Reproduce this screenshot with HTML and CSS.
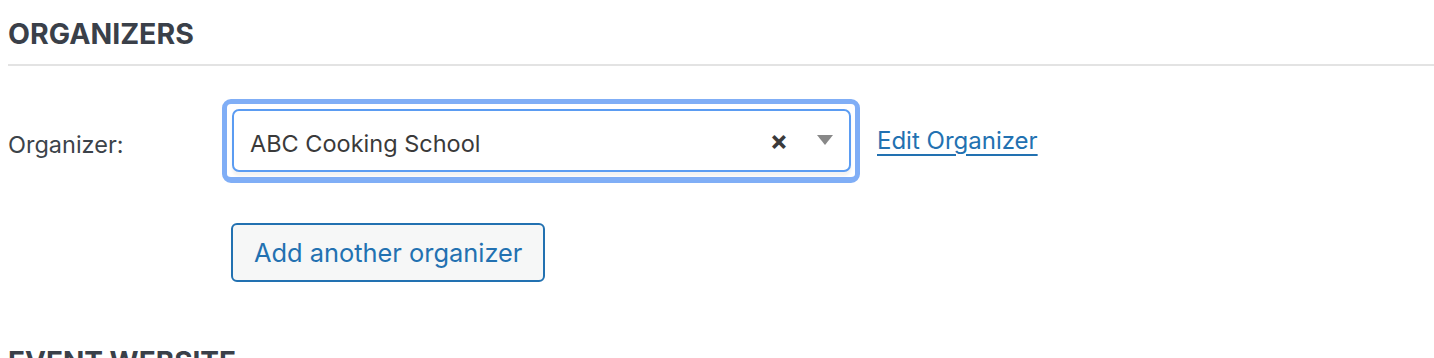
FILE: index.html
```html
<!DOCTYPE html>
<html lang="en">
<head>
    <meta charset="UTF-8">
    <meta name="viewport" content="width=device-width, initial-scale=1.0">
    <title>Organizers</title>
    <link rel="stylesheet" href="styles.css">
</head>
<body>
    <div class="section">
        <h3 class="section-title">ORGANIZERS</h3>

        <div class="field-row">
            <label class="field-label" for="organizer">Organizer:</label>
            <div class="select-focus">
                <div class="select-box" id="organizer">
                    <span class="select-value">ABC Cooking School</span>
                    <span class="select-clear">&times;</span>
                    <span class="select-arrow"></span>
                </div>
            </div>
            <a href="#" class="edit-link">Edit Organizer</a>
        </div>

        <div class="field-row add-row">
            <button class="button">Add another organizer</button>
        </div>
    </div>

    <div class="section">
        <h3 class="section-title">EVENT WEBSITE</h3>
    </div>
</body>
</html>
```

FILE: styles.css
```css
:root {
    --text-color: #3c434a;
    --heading-color: #3a4049;
    --link-color: #2271b1;
    --focus-ring: #80aef6;
    --focus-border: #5b9cf2;
    --divider: #e3e3e3;
}

* {
    margin: 0;
    padding: 0;
    box-sizing: border-box;
    font-family: Inter, 'Noto Sans', sans-serif;
}

body {
    background-color: #ffffff;
    color: var(--text-color);
    padding: 0 0 0 8px;
    overflow: hidden;
}

.section-title {
    font-size: 28.5px;
    font-weight: 700;
    color: var(--heading-color);
    line-height: 34px;
    padding-top: 17px;
    padding-bottom: 13px;
    border-bottom: 2px solid var(--divider);
}

.section + .section .section-title {
    border-bottom: none;
    font-size: 28px;
}

.field-row {
    display: flex;
    align-items: center;
    margin-top: 33px;
}

.field-label {
    width: 214px;
    font-size: 23.5px;
    color: var(--text-color);
    padding-top: 6px;
}

.select-focus {
    border: 5px solid var(--focus-ring);
    border-radius: 9px;
    padding: 5px 4px 5px 5px;
    border-bottom-width: 6px;
}

.select-box {
    display: flex;
    align-items: center;
    width: 619px;
    height: 63px;
    border: 2px solid var(--focus-border);
    border-radius: 7px;
    padding: 6px 16px 0 16px;
    box-shadow: 0 4px 3px rgba(0, 0, 0, 0.05);
    background-color: #ffffff;
}

.select-value {
    flex: 1;
    font-size: 23.5px;
    color: #3a3a3a;
}

.select-clear {
    font-size: 27px;
    font-weight: 700;
    color: #3a3a3a;
    margin-right: 29px;
    margin-top: -6px;
}

.select-arrow {
    width: 0;
    height: 0;
    border-left: 8px solid transparent;
    border-right: 8px solid transparent;
    border-top: 10px solid #888888;
    margin-top: -8px;
}

.edit-link {
    margin-left: 17px;
    font-size: 24px;
    color: var(--link-color);
    text-decoration: underline;
    text-decoration-thickness: 2px;
    text-underline-offset: 5px;
    margin-top: -2px;
}

.add-row {
    margin-top: 40px;
    padding-left: 223px;
}

.button {
    height: 59px;
    padding: 0 21px;
    border: 2px solid var(--link-color);
    border-radius: 6px;
    background-color: #f6f7f7;
    color: var(--link-color);
    font-size: 25.4px;
    cursor: pointer;
}

.section + .section {
    margin-top: 46px;
}
```
